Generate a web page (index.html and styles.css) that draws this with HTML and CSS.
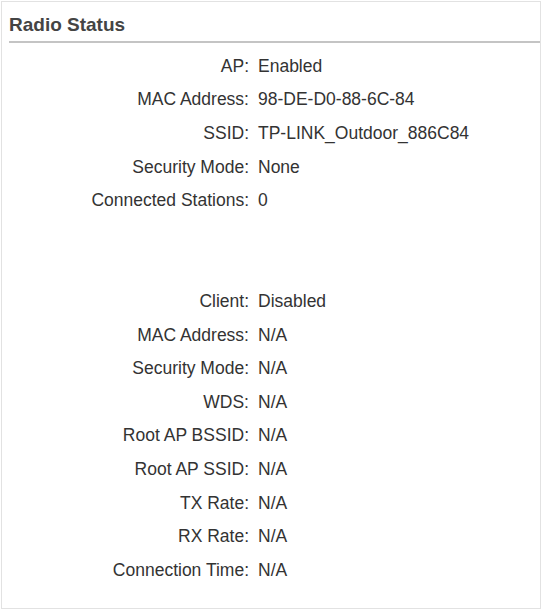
FILE: index.html
```html
<!DOCTYPE html>
<html lang="en">
<head>
    <meta charset="UTF-8">
    <title>Radio Status</title>
    <link rel="stylesheet" href="styles.css">
</head>
<body>
    <div class="panel">
        <h2 class="panel-title">Radio Status</h2>
        <table class="status-table">
            <tr><td class="label">AP:</td><td class="value">Enabled</td></tr>
            <tr><td class="label">MAC Address:</td><td class="value">98-DE-D0-88-6C-84</td></tr>
            <tr><td class="label">SSID:</td><td class="value">TP-LINK_Outdoor_886C84</td></tr>
            <tr><td class="label">Security Mode:</td><td class="value">None</td></tr>
            <tr><td class="label">Connected Stations:</td><td class="value">0</td></tr>
            <tr class="spacer"><td></td><td></td></tr>
            <tr class="spacer"><td></td><td></td></tr>
            <tr><td class="label">Client:</td><td class="value">Disabled</td></tr>
            <tr><td class="label">MAC Address:</td><td class="value">N/A</td></tr>
            <tr><td class="label">Security Mode:</td><td class="value">N/A</td></tr>
            <tr><td class="label">WDS:</td><td class="value">N/A</td></tr>
            <tr><td class="label">Root AP BSSID:</td><td class="value">N/A</td></tr>
            <tr><td class="label">Root AP SSID:</td><td class="value">N/A</td></tr>
            <tr><td class="label">TX Rate:</td><td class="value">N/A</td></tr>
            <tr><td class="label">RX Rate:</td><td class="value">N/A</td></tr>
            <tr><td class="label">Connection Time:</td><td class="value">N/A</td></tr>
        </table>
    </div>
</body>
</html>
```

FILE: styles.css
```css
body {
    margin: 0;
    background: #fff;
    font-family: "Liberation Sans", Arial, sans-serif;
    color: #333;
}
.panel {
    margin: 1px 0 0 1px;
    width: 540px;
    height: 608px;
    border: 1px solid #e2e2e2;
    box-sizing: border-box;
    background: #fff;
}
.panel-title {
    margin: 0 0 0 7px;
    padding: 12px 0 6px 0;
    font-size: 19px;
    font-weight: bold;
    color: #444;
    border-bottom: 2px solid #c4c4c4;
    line-height: 21px;
}
.status-table {
    border-collapse: collapse;
    margin-top: 6px;
    font-size: 17.5px;
}
.status-table td {
    height: 33.6px;
    padding: 0;
    line-height: 20px;
}
.status-table .label {
    width: 247px;
    text-align: right;
    padding-right: 9px;
}
.status-table .value {
    text-align: left;
}
```
